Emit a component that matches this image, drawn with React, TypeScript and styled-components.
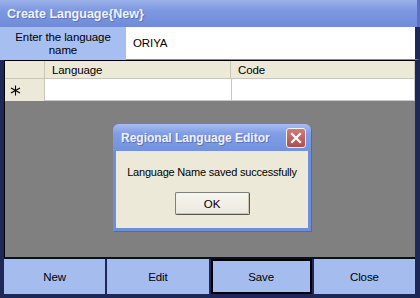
import styled, { createGlobalStyle } from 'styled-components'

// ─── Layout constants ────────────────────────────────────────────────────────
const WIN_W = 420
const WIN_H = 298
const LABEL_W = 126
const ROW_HEADER_W = 40
const LANG_COL_W = 186

const GlobalStyle = createGlobalStyle`
  html, body { margin: 0; padding: 0; background: #ffffff; }
  body { font-family: "Liberation Sans", Arial, sans-serif; }
`

const BUTTONS = ['New', 'Edit', 'Save', 'Close']

// ─── Component ───────────────────────────────────────────────────────────────
const App = () => (
  <>
    <GlobalStyle />
    <Window>
      <TitleBar>Create Language{'{'}New{'}'}</TitleBar>
      <NameRow>
        <NameLabel>
          Enter the language
          <br />
          name
        </NameLabel>
        <NameInput>ORIYA</NameInput>
      </NameRow>

      <Body>
        <Grid>
          <HeaderRow>
            <RowHeader />
            <ColHeader $w={LANG_COL_W}>Language</ColHeader>
            <ColHeader>Code</ColHeader>
          </HeaderRow>
          <DataRow>
            <RowHeader>
              {/* new-row indicator */}
              <svg width="11" height="11" viewBox="0 0 11 11">
                <path
                  d="M5.5 0.5 V10.5 M1 3 L10 8 M10 3 L1 8"
                  stroke="#000"
                  strokeWidth="1.1"
                  fill="none"
                />
              </svg>
            </RowHeader>
            <Cell $w={LANG_COL_W} />
            <Cell />
          </DataRow>
          <Empty />

          <Dialog>
            <DialogTitle>
              <span>Regional Language Editor</span>
              <CloseBox>
                <svg width="12" height="12" viewBox="0 0 12 12">
                  <path d="M2 2 L10 10 M10 2 L2 10" stroke="#fff" strokeWidth="2.2" strokeLinecap="square" />
                </svg>
              </CloseBox>
            </DialogTitle>
            <DialogBody>
              <Message>Language Name saved successfully</Message>
              <OkButton>OK</OkButton>
            </DialogBody>
          </Dialog>
        </Grid>

        <ButtonBar>
          {BUTTONS.map((b) => (
            <ActionButton key={b} $focused={b === 'Save'}>
              {b}
            </ActionButton>
          ))}
        </ButtonBar>
      </Body>
    </Window>
  </>
)

// ─── Styles ──────────────────────────────────────────────────────────────────

const Window = styled.div`
  width: ${WIN_W}px;
  height: ${WIN_H}px;
  display: flex;
  flex-direction: column;
  background: #1d2858;
  overflow: hidden;
  font-size: 11px;
  letter-spacing: -0.1px;
  color: #000;
`

const TitleBar = styled.div`
  height: 27px;
  flex-shrink: 0;
  display: flex;
  align-items: center;
  padding: 0 7px;
  box-sizing: border-box;
  background: linear-gradient(to bottom, #9cb1ea 0%, #7d98e0 40%, #6f8bdb 100%);
  border-right: 3px solid #5b70c4;
  color: #eef2fb;
  font-weight: bold;
  font-size: 12.5px;
  letter-spacing: 0;
  text-shadow: 1px 1px 0 #5e74b8;
`

const NameRow = styled.div`
  height: 33px;
  flex-shrink: 0;
  display: flex;
  background: #a6bdee;
`

const NameLabel = styled.div`
  width: ${LABEL_W}px;
  flex-shrink: 0;
  display: flex;
  align-items: center;
  justify-content: center;
  text-align: center;
  line-height: 13px;
  font-size: 11.5px;
  background: #a7bff0;
`

const NameInput = styled.div`
  flex: 1;
  display: flex;
  align-items: center;
  padding-left: 7px;
  font-size: 11.5px;
  background: #ffffff;
  border-right: 5px solid #1d2858;
  border-bottom: 1px solid #8a8a8a;
`

const Body = styled.div`
  flex: 1;
  display: flex;
  flex-direction: column;
  padding: 0 5px 4px 4px;
  min-height: 0;
`

const Grid = styled.div`
  position: relative;
  flex: 1;
  display: flex;
  flex-direction: column;
  background: #808080;
  border-top: 1px solid #000;
  border-bottom: 2px solid #0b0f24;
  border-left: 1px solid #000;
`

const HeaderRow = styled.div`
  height: 17px;
  display: flex;
  background: #ece9d8;
  border-bottom: 1px solid #cbc7b8;
`

const DataRow = styled.div`
  height: 22px;
  display: flex;
  background: #ffffff;
`

const RowHeader = styled.div`
  width: ${ROW_HEADER_W}px;
  flex-shrink: 0;
  display: flex;
  align-items: center;
  padding-left: 5px;
  box-sizing: border-box;
  background: #ece9d8;
  border-right: 1px solid #cbc7b8;
`

const ColHeader = styled.div<{ $w?: number }>`
  ${({ $w }) => ($w ? `width: ${$w}px; flex-shrink: 0;` : 'flex: 1;')}
  display: flex;
  align-items: center;
  padding-left: 7px;
  box-sizing: border-box;
  font-size: 11.5px;
  border-right: 1px solid #cbc7b8;
`

const Cell = styled.div<{ $w?: number }>`
  ${({ $w }) => ($w ? `width: ${$w}px; flex-shrink: 0;` : 'flex: 1;')}
  border-right: 1px solid #c8c8c8;
  border-bottom: 1px solid #c8c8c8;
`

const Empty = styled.div`
  flex: 1;
`

const Dialog = styled.div`
  position: absolute;
  left: 108px;
  top: 63px;
  width: 192px;
  display: flex;
  flex-direction: column;
  background: #6e8ddc;
  border-radius: 6px 6px 0 0;
  padding: 0 3px 3px 3px;
  box-shadow: 1px 1px 0 #5468b0;
`

const DialogTitle = styled.div`
  height: 27px;
  display: flex;
  align-items: center;
  justify-content: space-between;
  margin: 0 -3px;
  padding: 0 5px 0 8px;
  background: linear-gradient(to bottom, #a7bcf0 0%, #819de5 35%, #7192e0 100%);
  border-radius: 6px 6px 0 0;
  color: #eef2fb;
  font-weight: bold;
  font-size: 12px;
  letter-spacing: 0;
  text-shadow: 1px 1px 0 #5b72b9;
`

const CloseBox = styled.div`
  width: 18px;
  height: 18px;
  display: flex;
  align-items: center;
  justify-content: center;
  background: linear-gradient(to bottom, #d17a7a, #b04e4e);
  border: 1px solid #f2f2f2;
  border-radius: 3px;
`

const DialogBody = styled.div`
  display: flex;
  flex-direction: column;
  align-items: center;
  background: #ece9d8;
  padding: 15px 0 13px;
  gap: 14px;
`

const Message = styled.div`
  font-size: 11px;
  letter-spacing: -0.2px;
`

const OkButton = styled.div`
  width: 73px;
  height: 21px;
  display: flex;
  align-items: center;
  justify-content: center;
  font-size: 11.5px;
  background: linear-gradient(to bottom, #f6f5ee, #ebe9df);
  border: 1px solid #7e7e7e;
  border-right-color: #555;
  border-bottom-color: #555;
  box-shadow: inset -1px -1px 0 #c9c6b8;
  border-radius: 2px;
`

const ButtonBar = styled.div`
  height: 35px;
  flex-shrink: 0;
  display: grid;
  grid-template-columns: repeat(4, 1fr);
  gap: 2px;
  background: #1d2858;
`

const ActionButton = styled.div<{ $focused: boolean }>`
  display: flex;
  align-items: center;
  justify-content: center;
  background: #a4bcee;
  font-size: 11.5px;
  box-sizing: border-box;
  ${({ $focused }) => $focused && 'border: 2px solid #000;'}
`

export default App
